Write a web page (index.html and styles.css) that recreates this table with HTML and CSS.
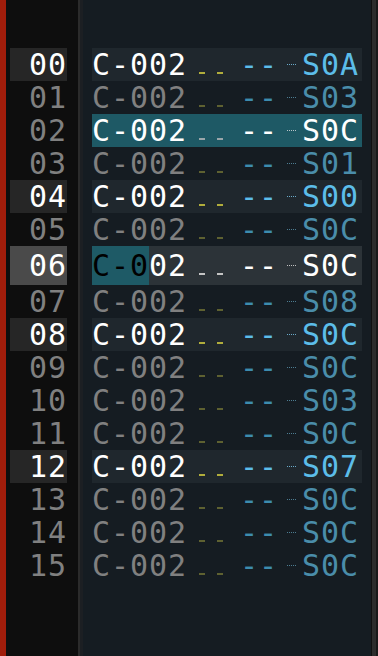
FILE: index.html
```html
<!DOCTYPE html>
<html>
<head>
<meta charset="utf-8">
<link rel="stylesheet" href="styles.css">
</head>
<body>
<div class="app">
  <div class="redbar"></div>
  <div class="numcol">
    <div class="num hl">00</div>
    <div class="num">01</div>
    <div class="num">02</div>
    <div class="num">03</div>
    <div class="num hl">04</div>
    <div class="num">05</div>
    <div class="num cur">06</div>
    <div class="num">07</div>
    <div class="num hl">08</div>
    <div class="num">09</div>
    <div class="num">10</div>
    <div class="num">11</div>
    <div class="num hl">12</div>
    <div class="num">13</div>
    <div class="num">14</div>
    <div class="num">15</div>
  </div>
  <div class="sep"></div>
  <div class="panel">
    <div class="row hl"><span class="note">C-0</span><span class="ins">02</span><span class="vol"><i></i><i></i></span><span class="fx">--</span><span class="dots"></span><span class="val">S0A</span></div>
    <div class="row"><span class="note">C-0</span><span class="ins">02</span><span class="vol"><i></i><i></i></span><span class="fx">--</span><span class="dots"></span><span class="val">S03</span></div>
    <div class="row sel"><span class="note">C-0</span><span class="ins">02</span><span class="vol"><i></i><i></i></span><span class="fx">--</span><span class="dots"></span><span class="val">S0C</span></div>
    <div class="row"><span class="note">C-0</span><span class="ins">02</span><span class="vol"><i></i><i></i></span><span class="fx">--</span><span class="dots"></span><span class="val">S01</span></div>
    <div class="row hl"><span class="note">C-0</span><span class="ins">02</span><span class="vol"><i></i><i></i></span><span class="fx">--</span><span class="dots"></span><span class="val">S00</span></div>
    <div class="row"><span class="note">C-0</span><span class="ins">02</span><span class="vol"><i></i><i></i></span><span class="fx">--</span><span class="dots"></span><span class="val">S0C</span></div>
    <div class="row cur"><span class="note">C-0</span><span class="ins">02</span><span class="vol"><i></i><i></i></span><span class="fx">--</span><span class="dots"></span><span class="val">S0C</span></div>
    <div class="row"><span class="note">C-0</span><span class="ins">02</span><span class="vol"><i></i><i></i></span><span class="fx">--</span><span class="dots"></span><span class="val">S08</span></div>
    <div class="row hl"><span class="note">C-0</span><span class="ins">02</span><span class="vol"><i></i><i></i></span><span class="fx">--</span><span class="dots"></span><span class="val">S0C</span></div>
    <div class="row"><span class="note">C-0</span><span class="ins">02</span><span class="vol"><i></i><i></i></span><span class="fx">--</span><span class="dots"></span><span class="val">S0C</span></div>
    <div class="row"><span class="note">C-0</span><span class="ins">02</span><span class="vol"><i></i><i></i></span><span class="fx">--</span><span class="dots"></span><span class="val">S03</span></div>
    <div class="row"><span class="note">C-0</span><span class="ins">02</span><span class="vol"><i></i><i></i></span><span class="fx">--</span><span class="dots"></span><span class="val">S0C</span></div>
    <div class="row hl"><span class="note">C-0</span><span class="ins">02</span><span class="vol"><i></i><i></i></span><span class="fx">--</span><span class="dots"></span><span class="val">S07</span></div>
    <div class="row"><span class="note">C-0</span><span class="ins">02</span><span class="vol"><i></i><i></i></span><span class="fx">--</span><span class="dots"></span><span class="val">S0C</span></div>
    <div class="row"><span class="note">C-0</span><span class="ins">02</span><span class="vol"><i></i><i></i></span><span class="fx">--</span><span class="dots"></span><span class="val">S0C</span></div>
    <div class="row"><span class="note">C-0</span><span class="ins">02</span><span class="vol"><i></i><i></i></span><span class="fx">--</span><span class="dots"></span><span class="val">S0C</span></div>
  </div>
  <div class="rborder"></div>
</div>
</body>
</html>
```
FILE: styles.css
```css
html, body {
  margin: 0;
  padding: 0;
  width: 378px;
  height: 656px;
  overflow: hidden;
  background: #0e0e0e;
}
.app {
  display: flex;
  height: 656px;
  font-family: "DejaVu Sans Mono", monospace;
  font-size: 30px;
  letter-spacing: 0.94px;
  line-height: 33px;
}
.redbar {
  width: 6px;
  background: #a11d0b;
  flex: none;
}
.numcol {
  width: 72px;
  flex: none;
  background: #0e0e0e;
  padding-top: 48px;
  box-sizing: border-box;
}
.num {
  margin-left: 4px;
  width: 57px;
  height: 33px;
  text-align: right;
  color: #808080;
  padding-right: 0;
  box-sizing: border-box;
  margin-right: -1px;
}
.num.hl { background: #262626; color: #ffffff; }
.num.cur { background: #4a4a4a; color: #ffffff; height: 39px; line-height: 39px; }
.sep {
  width: 5px;
  flex: none;
  border-left: 2px solid #2b2b2b;
  background: #1c1f23;
  box-sizing: border-box;
}
.panel {
  width: 288px;
  flex: none;
  background: #151c22;
  padding: 48px 0 0 9px;
  box-sizing: border-box;
}
.rborder {
  width: 7px;
  flex: none;
  background: #2d2d2d;
  border-left: 1px solid #111111;
  border-right: 2px solid #1a1a1a;
  box-sizing: border-box;
}
.row {
  display: flex;
  align-items: center;
  width: 270px;
  height: 33px;
  color: #808080;
  white-space: pre;
}
.row span { display: block; flex: none; }
.note { width: 57px; }
.ins { width: 38px; }
.vol {
  width: 53px;
  align-self: stretch;
  display: flex !important;
  align-items: center;
  padding-left: 12px;
  gap: 12px;
  box-sizing: border-box;
}
.vol i {
  display: block;
  width: 6px;
  height: 2px;
  margin-top: 16px;
  background: #5e6131;
}
.fx { width: 38px; color: #3d8cae; }
.dots {
  width: 9px;
  height: 0;
  margin-left: 9px;
  margin-right: 6px;
  border-top: 1px dotted #4d7d92;
}
.val { width: 57px; color: #4a8daa; }

.row.hl { background: #1f272d; color: #ffffff; }
.row.hl .vol i { background: #b0ad3c; }
.row.hl .fx { color: #5cbde9; }
.row.hl .dots { border-top-color: #6aaac9; }
.row.hl .val { color: #5cbde9; }

.row.sel { background: #1e5965; color: #ffffff; }
.row.sel .vol i { background: #9aa6aa; }
.row.sel .fx, .row.sel .val { color: #ffffff; }
.row.sel .dots { border-top-color: #b8c4c8; }

.row.cur { background: #2c3338; color: #ffffff; height: 39px; }
.row.cur .note { background: #1e5a66; color: #000000; align-self: stretch; line-height: 39px; }
.row.cur .vol i { background: #c4c4c4; }
.row.cur .fx, .row.cur .val { color: #ffffff; }
.row.cur .dots { border-top-color: #c0c0c0; }
```
